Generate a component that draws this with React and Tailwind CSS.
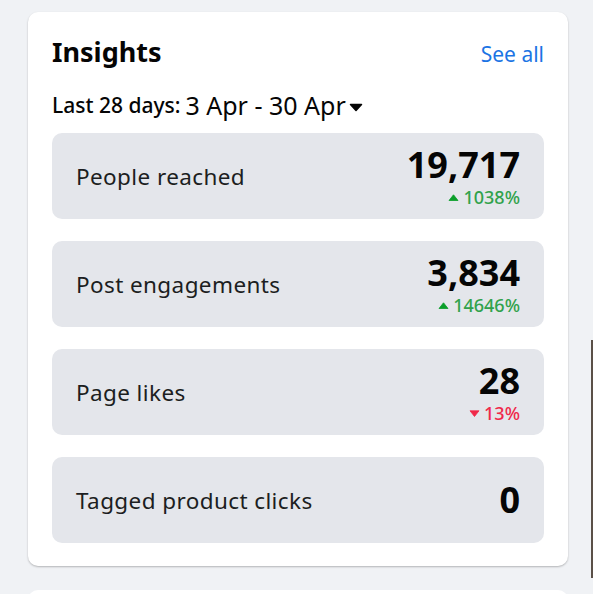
import React from 'react';

const rows = [
  { label: 'People reached', value: '19,717', change: '1038%', dir: 'up' },
  { label: 'Post engagements', value: '3,834', change: '14646%', dir: 'up' },
  { label: 'Page likes', value: '28', change: '13%', dir: 'down' },
  { label: 'Tagged product clicks', value: '0' },
];

const Tri = ({ dir }) => (
  <svg width="11" height="7" viewBox="0 0 11 7" className="mr-[4px] mt-[1px]">
    {dir === 'up'
      ? <path d="M5.5 0.8 L10 6.5 L1 6.5 Z" fill="#0a9e2a" stroke="#0a9e2a" strokeLinejoin="round" strokeWidth="0.8" />
      : <path d="M1 0.8 L10 0.8 L5.5 6.5 Z" fill="#f02849" stroke="#f02849" strokeLinejoin="round" strokeWidth="0.8" />}
  </svg>
);

export default function App() {
  return (
    <div className="h-[594px] bg-[#f0f2f5] pt-3 pl-7 pr-[25px] relative overflow-hidden" style={{ fontFamily: '"Noto Sans", "Open Sans", sans-serif' }}>
      <div className="bg-white rounded-[10px] shadow-[0_1px_2px_rgba(0,0,0,0.25)] px-6 pt-[22px] pb-[23px]">
        <div className="flex items-center justify-between h-[36px]">
          <h2 className="text-[27px] font-bold text-[#050505] leading-[36px]">Insights</h2>
          <a className="text-[21px] text-[#1b74e4] leading-[36px] pt-[4px]">See all</a>
        </div>
        <div className="flex items-center mt-[20px] h-[30px] text-[#050505]">
          <span className="text-[21px] font-medium leading-[30px]">Last 28 days:</span>
          <span className="text-[25px] leading-[30px] ml-[5px]">3 Apr - 30 Apr</span>
          <svg width="14" height="9" viewBox="0 0 14 9" className="ml-[3px] mt-[4px]">
            <path d="M1.5 1.5 L12.5 1.5 L7 7.5 Z" fill="#050505" strokeLinejoin="round" stroke="#050505" strokeWidth="1.5" />
          </svg>
        </div>
        <div className="flex flex-col gap-[22px] mt-[13px]">
          {rows.map((r) => (
            <div key={r.label} className="h-[86px] bg-[#e4e6eb] rounded-[10px] flex items-center justify-between px-6">
              <span className="text-[22.5px] leading-[30px] text-[#1c1e21] pt-[1px] tracking-[0.4px]">{r.label}</span>
              <div className="flex flex-col items-end">
                <span className="text-[36px] font-bold text-[#050505] leading-[38px]">{r.value}</span>
                {r.change && (
                  <span className={`flex items-center mt-[3px] text-[18px] font-medium leading-[20px] ${r.dir === 'up' ? 'text-[#31a24c]' : 'text-[#f02849]'}`}>
                    <Tri dir={r.dir} />
                    {r.change}
                  </span>
                )}
              </div>
            </div>
          ))}
        </div>
      </div>
      <div className="bg-white rounded-[10px] mt-6 h-[40px]" />
      <div className="absolute right-0 top-[340px] w-[2px] h-[238px] bg-[#5a5048]" />
    </div>
  );
}
